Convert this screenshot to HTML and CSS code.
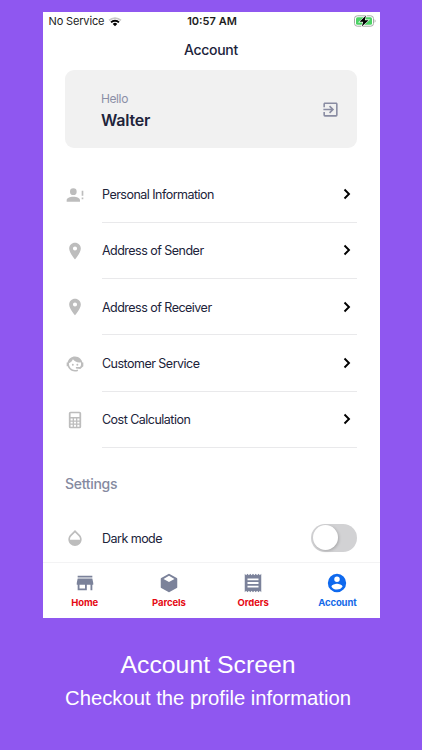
FILE: index.html
```
<!DOCTYPE html>
<html lang="en">
<head>
    <meta charset="UTF-8">
    <meta name="viewport" content="width=device-width, initial-scale=1.0">
    <title>Account Screen</title>
    <link rel="stylesheet" href="styles.css">
</head>
<body>
    <main class="phone">
        <div class="status-bar">
            <div class="carrier">
                <span class="carrier-name">No Service</span>
                <svg class="wifi" viewBox="0 0 26 20">
                    <path d="M2 8a16 16 0 0 1 22 0" fill="none" stroke="#c9c9c9" stroke-width="3.4"/>
                    <path d="M5.6 11.6a10.5 10.5 0 0 1 14.8 0" fill="none" stroke="#000" stroke-width="3.6"/>
                    <path d="M8.8 14.6a6 6 0 0 1 8.4 0L13 19z" fill="#000"/>
                </svg>
            </div>
            <span class="time">10:57 AM</span>
            <svg class="battery" viewBox="0 0 22 12">
                <rect x=".5" y=".8" width="19" height="10.4" rx="2.8" fill="#fff" stroke="#a5aaa6"/>
                <rect x="2" y="2.3" width="16" height="7.4" rx="1.5" fill="#4cd265"/>
                <path d="M20.6 4.3v3.4c1.3-.5 1.3-2.9 0-3.4z" fill="#a5aaa6"/>
                <path d="M12 .6L5.5 6.8h3.7L7.8 11.4 14.6 5.2h-3.8z" fill="#000" stroke="#fff" stroke-width="1.2" paint-order="stroke"/>
            </svg>
        </div>

        <h1 class="title">Account</h1>

        <div class="content">
            <section class="card">
                <div class="greeting">
                    <p class="hello">Hello</p>
                    <p class="name">Walter</p>
                </div>
                <svg class="exit" viewBox="0 0 24 24"><path d="M19 3H5c-1.11 0-2 .89-2 2v4h2V5h14v14H5v-4H3v4a2 2 0 0 0 2 2h14a2 2 0 0 0 2-2V5c0-1.11-.9-2-2-2m-8.92 12.58L11.5 17l5-5-5-5-1.42 1.41L12.67 11H3v2h9.67z"/></svg>
            </section>

            <ul class="menu">
                <li class="row">
                    <svg class="icon" viewBox="0 0 24 24"><path d="M10 4a4 4 0 1 1 0 8 4 4 0 0 1 0-8m0 10c4.42 0 8 1.79 8 4v2H2v-2c0-2.21 3.58-4 8-4m10-1V7h2v6zm0 4v-2h2v2z"/></svg>
                    <div class="row-body">
                        <span class="label">Personal Information</span>
                        <svg class="chevron" viewBox="0 0 8 12"><path d="M1.5 1.5L6 6l-4.5 4.5"/></svg>
                    </div>
                </li>
                <li class="row">
                    <svg class="icon" viewBox="0 0 24 24"><path d="M12 2C8.13 2 5 5.13 5 9c0 5.25 7 13 7 13s7-7.75 7-13c0-3.87-3.13-7-7-7zm0 9.5a2.5 2.5 0 1 1 0-5 2.5 2.5 0 0 1 0 5z"/></svg>
                    <div class="row-body">
                        <span class="label">Address of Sender</span>
                        <svg class="chevron" viewBox="0 0 8 12"><path d="M1.5 1.5L6 6l-4.5 4.5"/></svg>
                    </div>
                </li>
                <li class="row">
                    <svg class="icon" viewBox="0 0 24 24"><path d="M12 2C8.13 2 5 5.13 5 9c0 5.25 7 13 7 13s7-7.75 7-13c0-3.87-3.13-7-7-7zm0 9.5a2.5 2.5 0 1 1 0-5 2.5 2.5 0 0 1 0 5z"/></svg>
                    <div class="row-body">
                        <span class="label">Address of Receiver</span>
                        <svg class="chevron" viewBox="0 0 8 12"><path d="M1.5 1.5L6 6l-4.5 4.5"/></svg>
                    </div>
                </li>
                <li class="row">
                    <svg class="icon" viewBox="0 0 24 24"><path d="M18.72 14.76C19.07 13.91 19.26 13 19.26 12C19.26 11.28 19.15 10.59 18.96 9.95C18.31 10.1 17.63 10.18 16.92 10.18C13.86 10.18 11.15 8.67 9.5 6.34C8.61 8.5 6.91 10.26 4.77 11.22C4.73 11.47 4.73 11.74 4.73 12A7.27 7.27 0 0 0 12 19.27C13.05 19.27 14.06 19.04 14.97 18.63C15.54 19.72 15.8 20.26 15.78 20.26C14.14 20.81 12.87 21.08 12 21.08C9.58 21.08 7.27 20.13 5.57 18.42C4.53 17.38 3.76 16.11 3.33 14.73H2V10.18H3.09C3.93 6.04 7.6 2.92 12 2.92C14.4 2.92 16.71 3.87 18.42 5.58C19.69 6.84 20.54 8.45 20.89 10.18H22V14.73H21.94L18.38 18L13.08 17.4V15.73H17.91L18.72 14.76M9.27 11.77a1.14 1.14 0 1 1 0 2.27 1.14 1.14 0 0 1 0-2.27M14.72 11.77a1.14 1.14 0 1 1 0 2.27 1.14 1.14 0 0 1 0-2.27"/></svg>
                    <div class="row-body">
                        <span class="label">Customer Service</span>
                        <svg class="chevron" viewBox="0 0 8 12"><path d="M1.5 1.5L6 6l-4.5 4.5"/></svg>
                    </div>
                </li>
                <li class="row">
                    <svg class="icon" viewBox="0 0 24 24"><path fill-rule="evenodd" d="M6.6 2h10.8A2 2 0 0 1 19.4 4v16a2 2 0 0 1-2 2H6.6a2 2 0 0 1-2-2V4a2 2 0 0 1 2-2zM6.7 4v4.3h10.6V4zM6.7 10.2v2.3h2.5v-2.3zM10.75 10.2v2.3h2.5v-2.3zM14.8 10.2v2.3h2.5v-2.3zM6.7 14v2.3h2.5V14zM10.75 14v2.3h2.5V14zM14.8 14v2.3h2.5V14zM6.7 17.8v2.3h2.5v-2.3zM10.75 17.8v2.3h2.5v-2.3zM14.8 17.8v2.3h2.5v-2.3z"/></svg>
                    <div class="row-body">
                        <span class="label">Cost Calculation</span>
                        <svg class="chevron" viewBox="0 0 8 12"><path d="M1.5 1.5L6 6l-4.5 4.5"/></svg>
                    </div>
                </li>
            </ul>

            <h2 class="settings">Settings</h2>
            <div class="row dark-mode">
                <svg class="icon" viewBox="0 0 24 24"><path d="M17.66 8L12 2.35 6.34 8C4.78 9.56 4 11.64 4 13.64s.78 4.11 2.34 5.67 3.61 2.35 5.66 2.35 4.1-.79 5.66-2.35S20 15.64 20 13.64 19.22 9.56 17.66 8zM6 14c.01-2 .62-3.27 1.76-4.4L12 5.27l4.24 4.38C17.38 10.77 17.99 12 18 14H6z"/></svg>
                <div class="row-body">
                    <span class="label">Dark mode</span>
                    <span class="switch"><span class="knob"></span></span>
                </div>
            </div>
        </div>

        <nav class="tabs">
            <a class="tab">
                <svg viewBox="0 0 24 24"><path d="M12 18H6v-4h6m9 0v-2l-1-5H4l-1 5v2h1v6h10v-6h4v6h2v-6m0-10H4v2h16z"/></svg>
                <span>Home</span>
            </a>
            <a class="tab">
                <svg viewBox="0 0 24 24"><path d="M21 16.5c0 .38-.21.71-.53.88l-7.9 4.44a1 1 0 0 1-1.14 0l-7.9-4.44A1 1 0 0 1 3 16.5v-9c0-.38.21-.71.53-.88l7.9-4.44a1 1 0 0 1 1.14 0l7.9 4.44c.32.17.53.5.53.88zM12 4.15L6.04 7.5 12 10.85l5.96-3.35z"/></svg>
                <span>Parcels</span>
            </a>
            <a class="tab">
                <svg viewBox="0 0 24 24"><path d="M18 17H6v-2h12v2zm0-4H6v-2h12v2zm0-4H6V7h12v2zM3 22l1.5-1.5L6 22l1.5-1.5L9 22l1.5-1.5L12 22l1.5-1.5L15 22l1.5-1.5L18 22l1.5-1.5L21 22V2l-1.5 1.5L18 2l-1.5 1.5L15 2l-1.5 1.5L12 2l-1.5 1.5L9 2 7.5 3.5 6 2 4.5 3.5 3 2z"/></svg>
                <span>Orders</span>
            </a>
            <a class="tab active">
                <svg viewBox="0 0 24 24"><path d="M12 2a10 10 0 1 0 0 20 10 10 0 0 0 0-20zm0 3a3 3 0 1 1 0 6 3 3 0 0 1 0-6zm0 14.2c-2.5 0-4.71-1.28-6-3.22.03-1.99 4-3.08 6-3.08 1.99 0 5.97 1.09 6 3.08a7.2 7.2 0 0 1-6 3.22z"/></svg>
                <span>Account</span>
            </a>
        </nav>
    </main>

    <footer class="caption">
        <p class="caption-title">Account Screen</p>
        <p class="caption-text">Checkout the profile information</p>
    </footer>
</body>
</html>
```
FILE: styles.css
```
* { box-sizing: border-box; margin: 0; padding: 0; }
body {
    height: 750px;
    padding-top: 11.5px;
    overflow: hidden;
    background: #8f57f0;
    font-family: Inter, sans-serif;
    color: #20233a;
}
svg { display: block; flex: none; }

.phone {
    display: flex;
    flex-direction: column;
    width: 337px;
    height: 606px;
    margin: 0 auto;
    background: #fff;
}

.status-bar {
    display: grid;
    flex: none;
    grid-template-columns: 1fr auto 1fr;
    align-items: center;
    height: 19px;
    padding: 0 4px 0 6px;
    font-size: 11px;
    line-height: 19px;
    color: #1c1c1c;
}
.carrier { display: flex; align-items: center; gap: 4px; }
.carrier-name { letter-spacing: -0.15px; }
.wifi { width: 14px; height: 11px; }
.time { font-weight: 600; }
.battery { width: 22px; height: 12px; justify-self: end; }

.title {
    flex: none;
    height: 39px;
    padding-top: 9px;
    font-size: 14px;
    line-height: 20px;
    font-weight: 500;
    letter-spacing: -0.3px;
    text-align: center;
}

/* scroll area, cut off by the tab bar */
.content {
    flex: 1;
    min-height: 0;
    overflow: hidden;
}

.card {
    display: flex;
    align-items: center;
    justify-content: space-between;
    height: 78px;
    margin: 0.5px 22.5px 18.5px;
    padding: 0 17px 0 36px;
    border-radius: 9px;
    background: #f1f1f1;
}
.greeting { padding-top: 3px; }
.hello {
    font-size: 12px;
    line-height: 18px;
    letter-spacing: -0.4px;
    color: #8b8fa6;
}
.name {
    font-size: 16px;
    line-height: 24px;
    font-weight: 600;
    letter-spacing: -0.2px;
}
.exit { width: 19px; height: 19px; fill: #898ca2; }

.menu { list-style: none; }
.row {
    display: flex;
    align-items: center;
    gap: 17px;
    height: 56.3px;
    padding: 0 22.5px;
}
.icon { width: 20px; height: 20px; fill: #bdbdbd; }
.row-body {
    display: flex;
    flex: 1;
    align-items: center;
    justify-content: space-between;
    height: 100%;
    border-bottom: 1px solid #e9e9eb;
}
.label {
    padding-top: 1px;
    font-size: 12.5px;
    letter-spacing: -0.52px;
    white-space: nowrap;
}
.chevron {
    width: 8px;
    height: 12px;
    margin-right: 6px;
    fill: none;
    stroke: #000;
    stroke-width: 1.9;
}

.settings {
    height: 61.5px;
    padding: 24.5px 22.5px 0;
    font-size: 14px;
    line-height: 24px;
    font-weight: 500;
    letter-spacing: -0.3px;
    color: #858aa0;
}
.dark-mode .row-body { border: 0; }
.switch {
    width: 46px;
    height: 28px;
    padding: 1.5px;
    border-radius: 14px;
    background: #d2d2d4;
}
.knob {
    display: block;
    width: 25px;
    height: 25px;
    border-radius: 50%;
    background: #fff;
    box-shadow: 1px 1px 3px rgba(0, 0, 0, 0.2);
}

.tabs {
    display: grid;
    flex: none;
    grid-template-columns: repeat(4, 1fr);
    height: 55.5px;
    padding-top: 9px;
    border-top: 1px solid #f3f3f4;
}
.tab {
    display: flex;
    flex-direction: column;
    align-items: center;
    gap: 2px;
    font-size: 9.5px;
    line-height: 14px;
    font-weight: 700;
    letter-spacing: -0.1px;
    color: #e50914;
}
.tab svg { width: 22px; height: 22px; fill: #7b829a; }
.tab.active { color: #1469e8; }
.tab.active svg { fill: #0f69ee; }

.caption {
    padding: 31.5px 6px 0 0;
    font-family: "Liberation Sans", Arial, sans-serif;
    text-align: center;
    color: #fff;
}
.caption-title { font-size: 24.8px; line-height: 31px; }
.caption-text { font-size: 20.25px; line-height: 37px; }
```
